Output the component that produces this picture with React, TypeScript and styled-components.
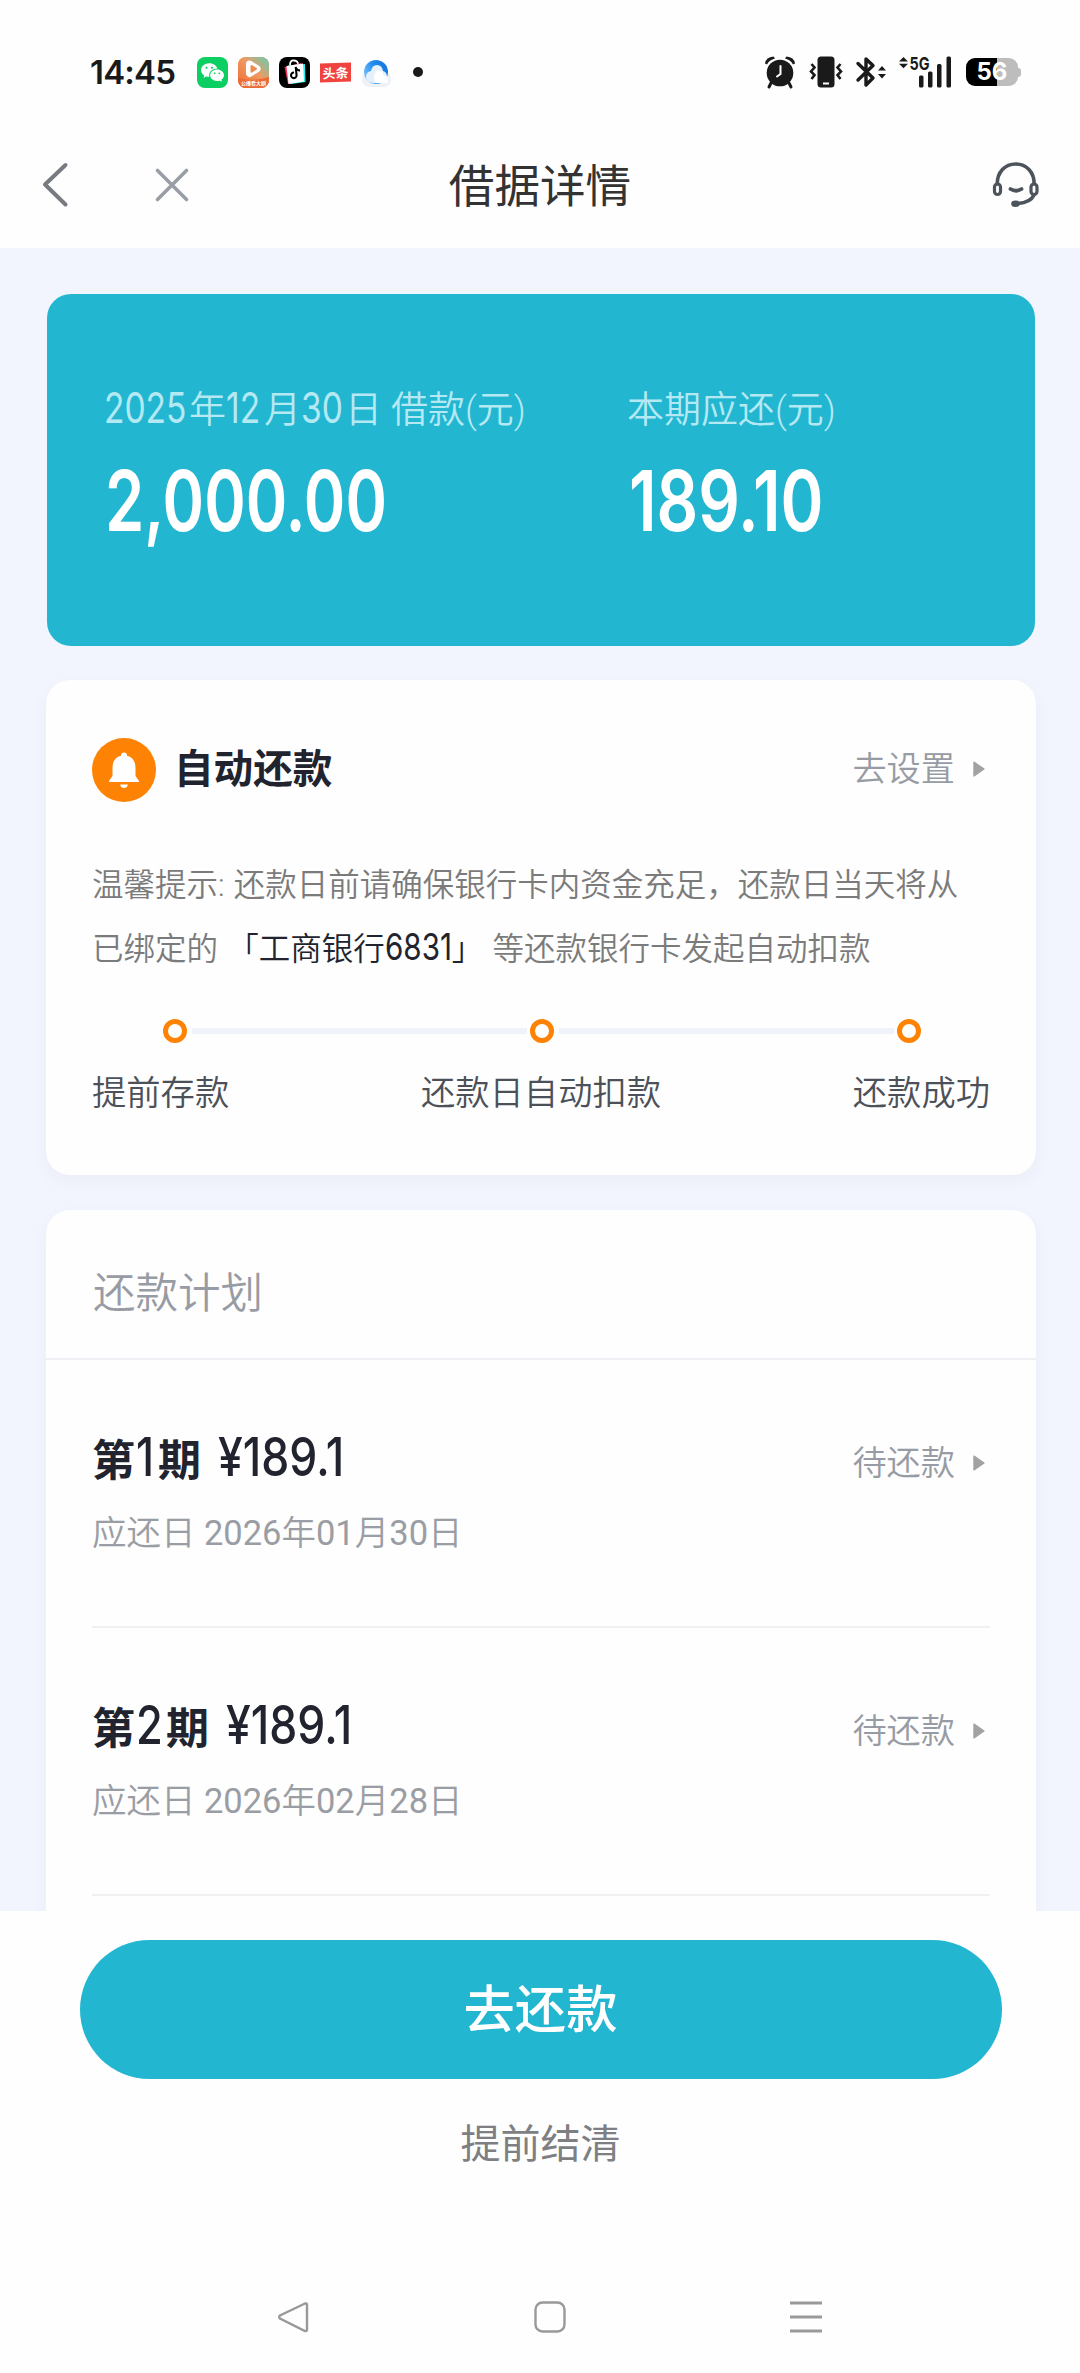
import React from "react";
import styled, { createGlobalStyle } from "styled-components";
import { RiWechatFill } from "react-icons/ri";
import { FaTiktok } from "react-icons/fa";

const TEAL = "#22b6d1";
const INK = "#21242e";
const MUTED = "#979ba4";
const ORANGE = "#fe8203";

const GlobalStyle = createGlobalStyle`
  * { box-sizing: border-box; }
  body {
    margin: 0;
    background: #fff;
    font-family: Roboto, "Noto Sans CJK SC", sans-serif;
    -webkit-font-smoothing: antialiased;
  }
  svg { display: block; flex: none; overflow: visible; }
`;

const Page = styled.div`
  width: 1080px;
  height: 2373px;
  display: flex;
  flex-direction: column;
  overflow: hidden;
  background: #fefefe;
`;

/* Narrow numerals: a proportional face condensed horizontally into a box of known width. */
const Din = styled.span<{ $size: number; $w: number; $scale: number; $weight?: number; $ml?: number }>`
  display: inline-block;
  width: ${(p) => p.$w}px;
  margin-left: ${(p) => p.$ml ?? 0}px;
  white-space: pre;
  font-family: Inter, sans-serif;
  font-size: ${(p) => p.$size}px;
  font-weight: ${(p) => p.$weight ?? 400};
  line-height: 1;
  transform: scaleX(${(p) => p.$scale});
  transform-origin: 0 50%;
`;

const StatusBar = styled.div`
  height: 124px;
  padding: 20px 59px 0 90px;
  display: flex;
  align-items: center;
  justify-content: space-between;
`;

const StatusGroup = styled.div<{ $gap: number }>`
  display: flex;
  align-items: center;
  gap: ${(p) => p.$gap}px;
`;

const Clock = styled.span`
  width: 97px;
  font: 600 33px/40px Inter, sans-serif;
  letter-spacing: -0.8px;
  color: #1a1a1a;
`;

const AppBadge = styled.span<{ $bg: string }>`
  width: 31px;
  height: 31px;
  border-radius: 8px;
  background: ${(p) => p.$bg};
  display: flex;
  align-items: center;
  justify-content: center;
  overflow: hidden;
`;

const NewsBadge = styled.span`
  width: 31px;
  height: 19px;
  background: #f0433f;
  color: #fff;
  font: 700 13px/19px "Noto Sans CJK SC", sans-serif;
  text-align: center;
  white-space: nowrap;
  transform: skewY(-2deg);
`;

const Dot = styled.span`
  width: 10px;
  height: 10px;
  border-radius: 50%;
  background: #1a1a1a;
  margin-left: 11px;
`;

const Battery = styled.span`
  width: 52px;
  height: 28px;
  border-radius: 9px;
  background: linear-gradient(90deg, #000 0 59%, #bdbdbd 59%);
  color: #fff;
  font: 700 24px/28px Inter, sans-serif;
  text-align: center;
`;

const BatteryWrap = styled.span`
  display: flex;
  align-items: center;
  margin-left: 14px;
  &::after {
    content: "";
    width: 3px;
    height: 9px;
    background: #bdbdbd;
    border-radius: 0 3px 3px 0;
  }
`;

const Header = styled.header`
  height: 124px;
  padding: 0 41px 2px;
  display: grid;
  grid-template-columns: 1fr auto 1fr;
  align-items: center;
`;

const HeaderLeft = styled.div`
  display: flex;
  align-items: center;
  gap: 84px;
`;

const HeaderRight = styled.div`
  display: flex;
  justify-content: flex-end;
`;

const Title = styled.h1`
  margin: 5px 0 0;
  font-size: 45.6px;
  line-height: 60px;
  font-weight: 400;
  color: #333;
`;

const Main = styled.main`
  height: 1663px;
  padding: 46px 44px 0 46px;
  background: #f2f5fd;
  overflow: hidden;
`;

const Summary = styled.section`
  height: 352px;
  margin: 0 1px;
  padding: 92px 0 0 57px;
  border-radius: 24px;
  background: ${TEAL};
  display: grid;
  grid-template-columns: 523px 1fr;
`;

const SummaryLabel = styled.div`
  font-size: 37px;
  line-height: 50px;
  font-weight: 350;
  color: #b4e9f3;
  white-space: pre;
`;

const Amount = styled.div`
  margin-top: 23px;
  height: 84px;
  color: #fff;
`;

const Card = styled.section`
  background: #fefefe;
  border-radius: 24px;
  box-shadow: 0 6px 18px rgba(40, 50, 100, 0.04);
`;

const AutoCard = styled(Card)`
  height: 495px;
  margin-top: 34px;
  padding: 58px 46px 0;
`;

const Between = styled.div`
  display: flex;
  align-items: center;
  justify-content: space-between;
`;

const AutoTitle = styled.h2`
  margin: 0;
  display: flex;
  align-items: center;
  gap: 18px;
  font-size: 39.6px;
  line-height: 64px;
  font-weight: 700;
  color: ${INK};
`;

const Action = styled.span`
  display: flex;
  align-items: center;
  gap: 18px;
  padding: 0 5px 2px 0;
  font-size: 34.2px;
  line-height: 50px;
  font-weight: 350;
  color: ${MUTED};
`;

const Tip = styled.p`
  margin: 52px 0 0;
  font-size: 31.5px;
  line-height: 64px;
  font-weight: 350;
  word-spacing: 1.5px;
  color: #7b7b7b;
  white-space: nowrap;
`;

const BankName = styled.span`
  color: ${INK};
`;

const Track = styled.div`
  margin: 37px 69px 0 71px;
  display: flex;
  align-items: center;
`;

const StepDot = styled.span`
  width: 24px;
  height: 24px;
  border: 5px solid ${ORANGE};
  border-radius: 50%;
`;

const StepLine = styled.span`
  flex: 1;
  height: 6px;
  margin: 0 3px 0 5px;
  background: #f1f3fa;
`;

const StepLabels = styled(Between)`
  margin-top: 25px;
  font-size: 34.3px;
  line-height: 50px;
  font-weight: 350;
  color: #4c5159;
`;

const PlanCard = styled(Card)`
  height: 760px;
  margin-top: 35px;
`;

const PlanTitle = styled.h2`
  margin: 0;
  height: 150px;
  padding: 54px 46px 0 47px;
  border-bottom: 2px solid #eef0f3;
  font-size: 42.5px;
  line-height: 60px;
  font-weight: 350;
  color: ${MUTED};
`;

const PlanRow = styled.div`
  height: 268px;
  margin: 0 46px;
  padding-top: 71px;
  border-bottom: 2px solid #eff0f2;
  ${Action} {
    margin-top: 6px;
  }
`;

const Period = styled.div`
  font-size: 43px;
  line-height: 60px;
  font-weight: 700;
  color: ${INK};
  white-space: pre;
`;

const DueDate = styled.div`
  margin-top: 17px;
  font-size: 34.5px;
  line-height: 50px;
  font-weight: 350;
  color: #9a9da3;
`;

const Num = styled.span`
  font-weight: 400;
`;

const Footer = styled.footer`
  flex: 1;
  padding: 29px 0 0 1px;
  display: flex;
  flex-direction: column;
  align-items: center;
`;

const PayButton = styled.button`
  width: 922px;
  height: 139px;
  border: 0;
  border-radius: 70px;
  background: ${TEAL};
  color: #fff;
  font: 500 51.3px/139px Roboto, "Noto Sans CJK SC", sans-serif;
`;

const SettleLink = styled.div`
  margin-top: 36px;
  font-size: 40px;
  line-height: 60px;
  font-weight: 400;
  color: #7d7f82;
`;

const SystemNav = styled.nav`
  margin-top: 126px;
  padding-left: 18px;
  display: flex;
  gap: 224px;
`;

const Arrow = () => (
  <svg width="12" height="16" viewBox="0 0 12 16">
    <path d="M1 1.2 11 8 1 14.8Z" fill="#a2a2a2" stroke="#a2a2a2" strokeWidth="1.4" strokeLinejoin="round" />
  </svg>
);

const VideoIcon = () => (
  <svg width="31" height="31" viewBox="0 0 31 31">
    <defs>
      <linearGradient id="video" x1="0" y1="1" x2="1" y2="0">
        <stop offset="0" stopColor="#ee6a33" />
        <stop offset="0.55" stopColor="#ef9a62" />
        <stop offset="1" stopColor="#5fd0b5" />
      </linearGradient>
    </defs>
    <rect width="31" height="31" fill="url(#video)" />
    <path d="M0 21q15 4 31-1v11H0Z" fill="#ec6b35" />
    <path d="M11.500 7 19 11.800 11.500 16.500Z" fill="#fff" stroke="#fff" strokeWidth="7" strokeLinejoin="round" />
    <path d="M13.500 9 18 11.800 13.500 14.600Z" fill="#ef8b50" stroke="#ef8b50" strokeWidth="2" strokeLinejoin="round" />
    <text x="15.5" y="28" textAnchor="middle" fontSize="5" fontWeight="700" fill="#fff" fontFamily="Noto Sans CJK SC">公播看大剧</text>
  </svg>
);

const ShopIcon = () => (
  <svg width="31" height="31" viewBox="0 0 31 31">
    <path d="M11 8q0-5 4-4.500t4 3.500" fill="none" stroke="#fff" strokeWidth="1.8" />
    <path d="M5.500 10 22 6 26 23 9 27Z" fill="#fe2c55" />
    <path d="M9 8.500 26 7 26.500 25 12 27Z" fill="#25f4ee" />
    <path d="M7.500 9 24 6.500 25 24.500 9.500 27Z" fill="#fff" />
  </svg>
);

const ShopBadge = styled(AppBadge)`
  position: relative;
  & > svg:last-child {
    position: absolute;
    left: 10px;
    top: 10px;
    transform: rotate(-6deg);
  }
`;

const BrowserIcon = () => (
  <svg width="31" height="31" viewBox="0 0 31 31">
    <defs>
      <linearGradient id="ring" x1="0" y1="0.7" x2="1" y2="0.2">
        <stop offset="0" stopColor="#7cc4fb" />
        <stop offset="0.5" stopColor="#1f8df0" />
        <stop offset="1" stopColor="#1672dc" />
      </linearGradient>
    </defs>
    <rect x="1" y="14" width="29" height="16" rx="7" fill="#eef2f8" />
    <circle cx="15" cy="15" r="12" fill="url(#ring)" />
    <path d="M10 14q1-6 6-6t6 6q4 1 4 6t-6 6h-8q-7-1-7-6 0-5 5-6Z" fill="#e6f0fb" />
    <path d="M15 26q-5-8 2-13 6 1 5 5 6 1 5 8Z" fill="#fff" />
  </svg>
);

const AlarmIcon = () => (
  <svg width="32" height="34" viewBox="0 0 32 34" fill="#1a1a1a">
    <circle cx="16" cy="18" r="13.3" />
    <path d="M1 8.5Q2 2 9.500 1.500L11 3.500Q5 5 3 9.500Z" />
    <path d="M31 8.500Q30 2 22.500 1.500L21 3.500Q27 5 29 9.500Z" />
    <path d="M7 28 5 32M25 28l2 4" stroke="#1a1a1a" strokeWidth="3" strokeLinecap="round" />
    <path d="M16.500 11v8l-3.500 2.500" fill="none" stroke="#fff" strokeWidth="2" strokeLinecap="round" />
  </svg>
);

const VibrateIcon = () => (
  <svg width="34" height="32" viewBox="-1.5 0 34 32">
    <rect x="8" y="0.500" width="17" height="31" rx="3.500" fill="#1a1a1a" />
    <path d="M13.500 27.500h6" stroke="#fff" strokeWidth="2" />
    <path d="m2 8 3 3.500-3.500 4L5 19l-3 4M31 8l-3 3.500 3.500 4L28 19l3 4" fill="none" stroke="#1a1a1a" strokeWidth="2.600" />
  </svg>
);

const BluetoothIcon = () => (
  <svg width="32" height="32" viewBox="-2 0 32 32">
    <path d="m2 7.500 15 14.500L10 29V3l7 6.500L2 24" fill="none" stroke="#1a1a1a" strokeWidth="3.400" strokeLinejoin="round" strokeLinecap="round" />
    <path d="m22 14.500 4-4.500 4 4.500ZM22 18l4 4.500 4-4.500Z" fill="#1a1a1a" />
  </svg>
);

const SignalIcon = () => (
  <svg width="54" height="32" viewBox="0 0 54 32" fill="#1a1a1a">
    <path d="M1 5.500 5.500 1 10 5.500ZM1 7.800l4.500 4.500L10 7.800Z" />
    <text x="11.500" y="13.500" fontSize="18" fontWeight="700" fontFamily="Inter, sans-serif" textLength="20" lengthAdjust="spacingAndGlyphs">5G</text>
    <rect x="21" y="19.500" width="4.500" height="12" rx="1.500" />
    <rect x="30" y="15.500" width="4.500" height="16" rx="1.500" />
    <rect x="39" y="8" width="4.500" height="23.500" rx="1.500" />
    <rect x="48.500" y="0.500" width="4.500" height="31" rx="1.500" />
  </svg>
);

const HeadsetIcon = () => (
  <svg width="48" height="48" viewBox="-0.5 0 48 48" fill="none" stroke="#4d535b" strokeWidth="3.600" strokeLinecap="round">
    <path d="M5.700 23C5.700 11 13.500 3 24.200 3S42.700 11 42.700 23" />
    <rect x="3" y="23" width="6" height="10.500" rx="3" strokeWidth="3.200" />
    <rect x="39.500" y="23" width="6" height="10.500" rx="3" strokeWidth="3.200" />
    <path d="M19 28q5.500 3.600 11 0" strokeWidth="3.800" />
    <path d="M42.500 34q-3.500 7.500-16 8.500" />
    <ellipse cx="24" cy="42.700" rx="4.300" ry="3.300" fill="#4d535b" stroke="none" />
  </svg>
);

const BellIcon = () => (
  <svg width="64" height="64" viewBox="0 0 64 64">
    <circle cx="32" cy="32" r="32" fill={ORANGE} />
    <path d="M32 14.500c2 0 3 1.200 3 3.200 6 1.500 8.500 6 8.500 12V38l3.500 5q.5 1-.8 1H17.800q-1.300 0-.8-1l3.500-5v-8.300c0-6 2.500-10.500 8.500-12 0-2 1-3.200 3-3.200Z" fill="#fff" />
    <path d="M28 46.500h8q-1 3.500-4 3.500t-4-3.500Z" fill="#fff" />
  </svg>
);

interface Installment {
  period: string;
  periodWidth: number;
  year: string;
  month: string;
  day: string;
}

const installments: Installment[] = [
  { period: "1", periodWidth: 22, year: "2026", month: "01", day: "30" },
  { period: "2", periodWidth: 30, year: "2026", month: "02", day: "28" },
];

export default function App() {
  return (
    <Page>
      <GlobalStyle />
      <StatusBar>
        <StatusGroup $gap={10}>
          <Clock>14:45</Clock>
          <AppBadge $bg="#0bcf63"><RiWechatFill size={25} color="#fff" /></AppBadge>
          <AppBadge $bg="#ef8b50"><VideoIcon /></AppBadge>
          <ShopBadge $bg="#000"><ShopIcon /><FaTiktok size={12} color="#000" /></ShopBadge>
          <NewsBadge>头条</NewsBadge>
          <BrowserIcon />
          <Dot />
        </StatusGroup>
        <StatusGroup $gap={0}>
          <StatusGroup $gap={12}>
            <AlarmIcon />
            <VibrateIcon />
            <BluetoothIcon />
            <SignalIcon />
          </StatusGroup>
          <BatteryWrap><Battery>56</Battery></BatteryWrap>
        </StatusGroup>
      </StatusBar>

      <Header>
        <HeaderLeft>
          <svg width="30" height="46" viewBox="0 0 30 46" fill="none" stroke="#777b81" strokeWidth="4" strokeLinecap="round">
            <path d="M24.500 3 4 22.500 24.500 42.500" strokeLinejoin="round" />
          </svg>
          <svg width="34" height="34" viewBox="0 0 34 34" stroke="#999ea6" strokeWidth="3.600" strokeLinecap="round">
            <path d="m2.500 2.500 29 29M31.500 2.500l-29 29" />
          </svg>
        </HeaderLeft>
        <Title>借据详情</Title>
        <HeaderRight><HeadsetIcon /></HeaderRight>
      </Header>

      <Main>
        <Summary>
          <div>
            <SummaryLabel>
              <Din $size={43} $w={85} $scale={0.78}>2025</Din>年
              <Din $size={43} $w={38} $scale={0.78}>12</Din>月
              <Din $size={43} $w={44} $scale={0.78}>30</Din>日 借款(元)
            </SummaryLabel>
            <Amount><Din $size={84} $w={280} $scale={0.75} $weight={600} $ml={1}>2,000.00</Din></Amount>
          </div>
          <div>
            <SummaryLabel>本期应还(元)</SummaryLabel>
            <Amount><Din $size={84} $w={200} $scale={0.775} $weight={600} $ml={2}>189.10</Din></Amount>
          </div>
        </Summary>

        <AutoCard>
          <Between>
            <AutoTitle><BellIcon />自动还款</AutoTitle>
            <Action>去设置<Arrow /></Action>
          </Between>
          <Tip>
            温馨提示: 还款日前请确保银行卡内资金充足，还款日当天将从
            <br />
            已绑定的 <BankName>「工商银行<Din $size={37} $w={67} $scale={0.8}>6831</Din>」</BankName> 等还款银行卡发起自动扣款
          </Tip>
          <Track>
            <StepDot />
            <StepLine />
            <StepDot />
            <StepLine />
            <StepDot />
          </Track>
          <StepLabels>
            <span>提前存款</span>
            <span>还款日自动扣款</span>
            <span>还款成功</span>
          </StepLabels>
        </AutoCard>

        <PlanCard>
          <PlanTitle>还款计划</PlanTitle>
          {installments.map((item) => (
            <PlanRow key={item.period}>
              <Between>
                <Period>
                  第<Din $size={53} $w={item.periodWidth} $scale={0.82} $weight={550} $ml={1}>{item.period}</Din>期{" "}
                  <Din $size={53} $w={130} $scale={0.84} $weight={550} $ml={6}>¥189.1</Din>
                </Period>
                <Action>待还款<Arrow /></Action>
              </Between>
              <DueDate>
                应还日 <Num>{item.year}</Num>年<Num>{item.month}</Num>月<Num>{item.day}</Num>日
              </DueDate>
            </PlanRow>
          ))}
        </PlanCard>
      </Main>

      <Footer>
        <PayButton>去还款</PayButton>
        <SettleLink>提前结清</SettleLink>
        <SystemNav>
          <svg width="32" height="32" viewBox="1 0 32 32" fill="none" stroke="#999" strokeWidth="2.400">
            <path d="M28 2.500 3 14.500q-1.600 1.500 0 3L28 30q2 .5 2-1.500v-25q0-1.500-2-1Z" />
          </svg>
          <svg width="32" height="32" viewBox="0 0 32 32" fill="none" stroke="#999" strokeWidth="2.400">
            <rect x="1.500" y="1.500" width="29" height="29" rx="7" />
          </svg>
          <svg width="32" height="32" viewBox="0 0 32 32" stroke="#999" strokeWidth="2.800">
            <path d="M0 2h32M0 16h32M0 30h32" />
          </svg>
        </SystemNav>
      </Footer>
    </Page>
  );
}
